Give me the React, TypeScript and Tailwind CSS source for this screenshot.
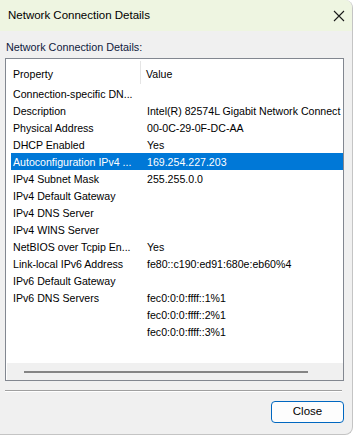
const ROWS: [string, string][] = [
  ["Connection-specific DN...", ""],
  ["Description", "Intel(R) 82574L Gigabit Network Connect"],
  ["Physical Address", "00-0C-29-0F-DC-AA"],
  ["DHCP Enabled", "Yes"],
  ["Autoconfiguration IPv4 ...", "169.254.227.203"],
  ["IPv4 Subnet Mask", "255.255.0.0"],
  ["IPv4 Default Gateway", ""],
  ["IPv4 DNS Server", ""],
  ["IPv4 WINS Server", ""],
  ["NetBIOS over Tcpip En...", "Yes"],
  ["Link-local IPv6 Address", "fe80::c190:ed91:680e:eb60%4"],
  ["IPv6 Default Gateway", ""],
  ["IPv6 DNS Servers", "fec0:0:0:ffff::1%1"],
  ["", "fec0:0:0:ffff::2%1"],
  ["", "fec0:0:0:ffff::3%1"],
];

const SELECTED = 4;

export default function App() {
  return (
    <div className="w-[355px] h-[437px] bg-white font-['Liberation_Sans',Arial,sans-serif] text-black overflow-hidden">
      <div className="w-[353px] h-[435px] flex flex-col bg-[#f0f0f0] border-r border-b border-[#c4c4c4] rounded-tr-[8px] rounded-br-[8px] overflow-hidden">
        {/* Title bar */}
        <div className="h-[31px] shrink-0 bg-[#eef5e1] flex items-center justify-between pl-[8px] pr-[7px]">
          <span className="text-[11.5px] leading-none">Network Connection Details</span>
          <svg width="12" height="12" viewBox="0 0 12 12">
            <path d="M1 1 L11 11 M11 1 L1 11" stroke="#1a1a1a" strokeWidth="1.1" />
          </svg>
        </div>

        <div className="flex-1 flex flex-col pl-[5px]">
          <div className="pt-[10px] text-[10.8px] leading-[13px] pl-[1px] text-[#0f1a3c]">
            Network Connection Details:
          </div>

          {/* List view */}
          <div className="mt-[4px] w-[339px] h-[323px] border border-[#828790] bg-white flex flex-col overflow-hidden">
            <div className="h-[26px] shrink-0 flex text-[10.6px] pl-[5px]">
              <div className="w-[130px] pl-[2px] pt-[6px] border-r border-[#e5e5e5] mt-[2px] mb-[1px]">
                Property
              </div>
              <div className="pl-[5px] pt-[8px]">Value</div>
            </div>
            <div className="flex-1 flex flex-col pl-[5px]">
              {ROWS.map(([k, v], i) => (
                <div
                  key={i}
                  className={
                    "h-[17px] flex items-center pt-[2px] text-[10.6px] whitespace-nowrap " +
                    (i === SELECTED ? "bg-[#0078d7] text-white" : "")
                  }
                >
                  <div className="w-[130px] pl-[2px] overflow-hidden">{k}</div>
                  <div className="flex-1 pl-[6px] overflow-hidden">{v}</div>
                </div>
              ))}
            </div>
            {/* horizontal scrollbar */}
            <div className="h-[17px] shrink-0 bg-[#f0f0f0] flex items-center ml-[1px]">
              <div className="ml-[17px] w-[284px] h-[2px] bg-[#858585]" />
            </div>
          </div>

          <div className="mt-[9px] w-[337px] h-[2px] border-t border-[#a0a0a0] border-b border-b-white" />

          <div className="flex mt-[9px] w-[339px] justify-end">
            <button className="w-[73px] h-[22px] rounded-[4px] border border-[#0067c0] bg-[#fdfdfd] text-[11.5px] leading-none">
              Close
            </button>
          </div>
        </div>
      </div>
    </div>
  );
}
